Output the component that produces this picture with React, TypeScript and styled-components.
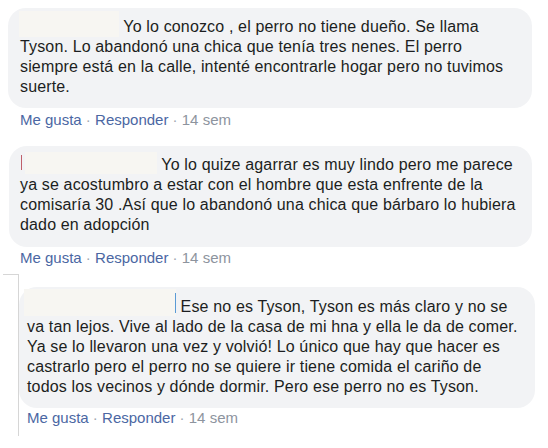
import React from "react";
import styled, { createGlobalStyle } from "styled-components";

const Global = createGlobalStyle`
  html, body { margin: 0; padding: 0; background: #ffffff; }
  body { font-family: "Liberation Sans", Arial, sans-serif; }
`;

const Page = styled.div`
  width: 548px;
  height: 448px;
  overflow: hidden;
  background: #ffffff;
  display: flex;
  flex-direction: column;
  padding-top: 8px;
  box-sizing: border-box;
`;

const Comment = styled.div<{ $left: number; $gapAfter: number }>`
  display: flex;
  flex-direction: column;
  margin-left: ${(p) => p.$left}px;
  margin-bottom: ${(p) => p.$gapAfter}px;
`;

const Bubble = styled.div<{ $width: number; $padLeft: number; $padTop: number; $padBottom: number }>`
  width: ${(p) => p.$width}px;
  box-sizing: border-box;
  background: #f2f3f5;
  border-radius: 18px;
  padding: ${(p) => p.$padTop}px 8px ${(p) => p.$padBottom}px ${(p) => p.$padLeft}px;
  font-size: 16px;
  letter-spacing: 0.15px;
  line-height: 20px;
  color: #1c1e21;
  white-space: nowrap;
`;

const Line = styled.div`
  height: 20px;
`;

const Redacted = styled.span<{ $width: number; $up: number; $height: number; $shift: number }>`
  display: inline-block;
  vertical-align: top;
  width: ${(p) => p.$width}px;
  height: ${(p) => p.$height}px;
  margin-top: -${(p) => p.$up}px;
  margin-bottom: ${(p) => 20 - p.$height + p.$up}px;
  margin-left: ${(p) => p.$shift}px;
  background: #f7f6f2;
  position: relative;
`;

const Caret = styled.span<{ $color: string; $top: number; $height: number }>`
  position: absolute;
  right: 0;
  top: ${(p) => p.$top}px;
  width: 1px;
  height: ${(p) => p.$height}px;
  background: ${(p) => p.$color};
`;

const CaretLeft = styled(Caret)`
  right: auto;
  left: -4px;
`;

const Actions = styled.div<{ $left: number; $top: number }>`
  margin-top: ${(p) => p.$top}px;
  margin-left: ${(p) => p.$left}px;
  font-size: 15px;
  line-height: 18px;
  color: #8d949e;
  white-space: nowrap;
`;

const Link = styled.span`
  color: #4b67a3;
`;

const Sep = styled.span`
  color: #a0a6b0;
`;

const Thread = styled.div`
  display: flex;
  align-items: flex-start;
`;

const Rail = styled.div`
  margin-left: 3px;
  width: 16px;
  height: 162px;
  border-top: 1px solid #d6d6d6;
  border-right: 1px solid #d6d6d6;
  box-sizing: border-box;
  flex-shrink: 0;
`;

const Reply = styled.div`
  display: flex;
  flex-direction: column;
  padding-top: 13px;
`;

const ActionRow = ({ left, top }: { left: number; top: number }) => (
  <Actions $left={left} $top={top}>
    <Link>Me gusta</Link>
    <Sep> · </Sep>
    <Link>Responder</Link>
    <Sep> · </Sep>
    <span>14 sem</span>
  </Actions>
);

export default function App() {
  return (
    <>
      <Global />
      <Page>
        <Comment $left={8} $gapAfter={17}>
          <Bubble $width={524} $padLeft={12} $padTop={9} $padBottom={11}>
            <Line>
              <Redacted $width={100} $up={6} $height={26} $shift={-1} />{" "}
              Yo lo conozco , el perro no tiene dueño. Se llama
            </Line>
            <Line>Tyson. Lo abandonó una chica que tenía tres nenes. El perro</Line>
            <Line>siempre está en la calle, intenté encontrarle hogar pero no tuvimos</Line>
            <Line>suerte.</Line>
          </Bubble>
          <ActionRow left={12} top={3} />
        </Comment>

        <Comment $left={9} $gapAfter={7}>
          <Bubble $width={523} $padLeft={11} $padTop={9} $padBottom={12}>
            <Line>
              <Redacted $width={132} $up={3} $height={22} $shift={5}>
                <CaretLeft $color="#c0606a" $top={3} $height={15} />
              </Redacted>{" "}
              Yo lo quize agarrar es muy lindo pero me parece
            </Line>
            <Line>ya se acostumbro a estar con el hombre que esta enfrente de la</Line>
            <Line>comisaría 30 .Así que lo abandonó una chica que bárbaro lo hubiera</Line>
            <Line>dado en adopción</Line>
          </Bubble>
          <ActionRow left={11} top={2} />
        </Comment>

        <Thread>
          <Rail />
          <Reply>
            <Bubble $width={516} $padLeft={8} $padTop={10} $padBottom={11}>
              <Line>
                <Redacted $width={152} $up={8} $height={27} $shift={-3}>
                  <Caret $color="#5b9bd5" $top={4} $height={20} />
                </Redacted>{" "}
                Ese no es Tyson, Tyson es más claro y no se
              </Line>
              <Line>va tan lejos. Vive al lado de la casa de mi hna y ella le da de comer.</Line>
              <Line>Ya se lo llevaron una vez y volvió! Lo único que hay que hacer es</Line>
              <Line>castrarlo pero el perro no se quiere ir tiene comida el cariño de</Line>
              <Line>todos los vecinos y dónde dormir. Pero ese perro no es Tyson.</Line>
            </Bubble>
            <ActionRow left={8} top={1} />
          </Reply>
        </Thread>
      </Page>
    </>
  );
}
